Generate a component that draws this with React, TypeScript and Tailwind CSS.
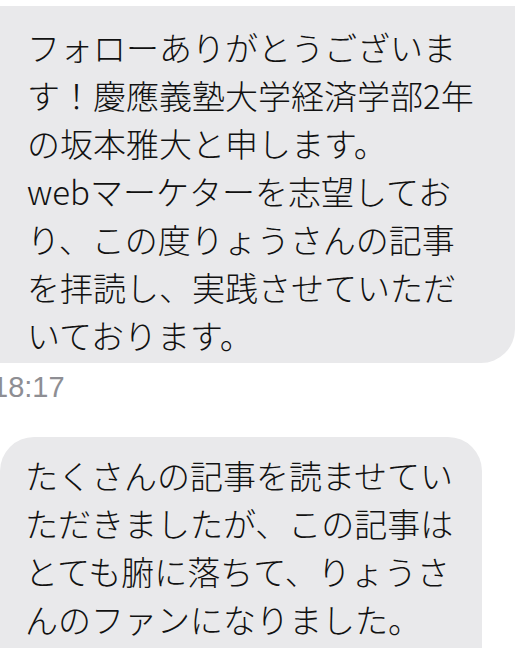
import React from "react";

export default function App() {
  const bubble1 = [
    "フォローありがとうございま",
    "す！慶應義塾大学経済学部2年",
    "の坂本雅大と申します。",
    "webマーケターを志望してお",
    "り、この度りょうさんの記事",
    "を拝読し、実践させていただ",
    "いております。",
  ];
  const bubble2 = [
    "たくさんの記事を読ませてい",
    "ただきましたが、この記事は",
    "とても腑に落ちて、りょうさ",
    "んのファンになりました。",
    "そこで、ぜひりょうさんに",
  ];
  return (
    <div className="flex h-[648px] w-[527px] flex-col items-start overflow-hidden bg-white">
      <div className="mt-[6px] flex w-[515px] flex-col rounded-br-[34px] bg-[#e9e9eb] pb-[4px] pl-[27px] pt-[17px] text-[33px] font-light leading-[48px] whitespace-nowrap text-[#111] [font-family:'Noto_Sans_CJK_JP','Noto_Sans',sans-serif]">
        {bubble1.map((l, i) => (
          <span key={i}>{l}</span>
        ))}
      </div>
      <div className="ml-[-8px] mt-[10px] text-[29px] leading-none text-[#8e8e93] [font-family:'Liberation_Sans',Arial,sans-serif]">
        18:17
      </div>
      <div className="mt-[35px] flex w-[482px] flex-col rounded-t-[34px] bg-[#e9e9eb] pb-[20px] pl-[25px] pt-[14px] text-[33px] font-light leading-[48px] whitespace-nowrap text-[#111] [font-family:'Noto_Sans_CJK_JP','Noto_Sans',sans-serif]">
        {bubble2.map((l, i) => (
          <span key={i}>{l}</span>
        ))}
      </div>
    </div>
  );
}
